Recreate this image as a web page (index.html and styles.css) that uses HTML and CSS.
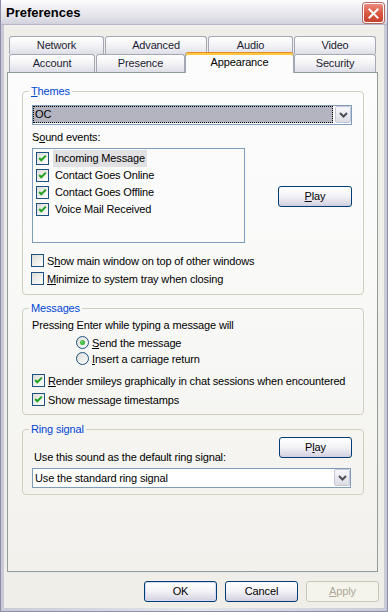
FILE: index.html
```html
<!DOCTYPE html>
<html>
<head>
<meta charset="utf-8">
<title>Preferences</title>
<link rel="stylesheet" href="styles.css">
</head>
<body>
<div class="window">
  <div class="titlebar">
    <span class="title">Preferences</span>
    <div class="close">
      <svg width="21" height="20" viewBox="0 0 21 20"><path d="M6 5 L15 14 M15 5 L6 14" stroke="#fff" stroke-width="2.2" stroke-linecap="square"/></svg>
    </div>
  </div>
  <div class="client">
    <div class="tabs">
      <div class="tabrow">
        <div class="tab t-network">Network</div>
        <div class="tab t-advanced">Advanced</div>
        <div class="tab t-audio">Audio</div>
        <div class="tab t-video">Video</div>
      </div>
      <div class="tabrow">
        <div class="tab t-account">Account</div>
        <div class="tab t-presence">Presence</div>
        <div class="tab t-appearance selected">Appearance</div>
        <div class="tab t-security">Security</div>
      </div>
    </div>
    <div class="panel">
      <fieldset class="group g-themes">
        <legend><u>T</u>hemes</legend>
        <div class="combo focused">
          <div class="combo-field"><span class="combo-text">OC</span></div>
          <div class="combo-btn"><svg width="9" height="6" viewBox="0 0 9 6"><path d="M1 1 L4.5 4.5 L8 1" fill="none" stroke="#4d4d5a" stroke-width="2"/></svg></div>
        </div>
        <div class="label sound-label">S<u>o</u>und events:</div>
        <div class="sound-row">
          <div class="listbox">
            <div class="lrow"><span class="cb checked"></span><span class="ltext hl">Incoming Message</span></div>
            <div class="lrow"><span class="cb checked"></span><span class="ltext">Contact Goes Online</span></div>
            <div class="lrow"><span class="cb checked"></span><span class="ltext">Contact Goes Offline</span></div>
            <div class="lrow"><span class="cb checked"></span><span class="ltext">Voice Mail Received</span></div>
          </div>
          <div class="btn play1"><u>P</u>lay</div>
        </div>
        <div class="check c-first"><span class="cb"></span><span>S<u>h</u>ow main window on top of other windows</span></div>
        <div class="check c-next"><span class="cb"></span><span><u>M</u>inimize to system tray when closing</span></div>
      </fieldset>

      <fieldset class="group g-messages">
        <legend>Messages</legend>
        <div class="label msg-label">Pressing Enter while typing a message will</div>
        <div class="radio r-first"><span class="rb on"></span><span><u>S</u>end the message</span></div>
        <div class="radio r-next"><span class="rb"></span><span><u>I</u>nsert a carriage return</span></div>
        <div class="check c-render"><span class="cb checked"></span><span><u>R</u>ender smileys graphically in chat sessions when encountered</span></div>
        <div class="check c-stamp"><span class="cb checked"></span><span>Show message timestamps</span></div>
      </fieldset>

      <fieldset class="group g-ring">
        <legend>Ring signal</legend>
        <div class="ring-top"><div class="btn play2">P<u>l</u>ay</div></div>
        <div class="label ring-label">Use this sound as the default ring signal:</div>
        <div class="combo ring-combo">
          <div class="combo-field plain"><span class="combo-text">Use the standard ring signal</span></div>
          <div class="combo-btn"><svg width="9" height="6" viewBox="0 0 9 6"><path d="M1 1 L4.5 4.5 L8 1" fill="none" stroke="#4d4d5a" stroke-width="2"/></svg></div>
        </div>
      </fieldset>
    </div>
    <div class="buttons">
      <div class="btn default">OK</div>
      <div class="btn">Cancel</div>
      <div class="btn disabled"><u>A</u>pply</div>
    </div>
  </div>
</div>
</body>
</html>
```
FILE: styles.css
```css
* { box-sizing: border-box; }
html, body { margin: 0; padding: 0; }
body {
  width: 388px; height: 612px; overflow: hidden;
  font-family: "Liberation Sans", Arial, sans-serif;
  font-size: 11px; color: #000; background: #fff;
  letter-spacing: -0.15px;
  white-space: nowrap;
}
u { text-decoration: underline; text-underline-offset: 1px; }

.window {
  width: 388px; height: 612px;
  display: flex; flex-direction: column;
  background: linear-gradient(90deg, #c9c9d8, #e4e4ec 50%, #c9c9d8);
  border: 1px solid #8d8daa; border-top: 0;
}
.titlebar {
  height: 25px; flex: none;
  display: flex; align-items: center; justify-content: space-between;
  padding: 0 3px 0 5px;
  background: linear-gradient(#fdfdfe 0%, #eeeef3 35%, #e2e2ea 70%, #d2d2de 100%);
  border-bottom: 1px solid #b6b6c8;
}
.title { font-size: 13px; font-weight: bold; color: #000; margin-top: 1px; letter-spacing: 0; }
.close {
  width: 21px; height: 20px; margin-top: 2px;
  border: 1px solid #fff; border-radius: 3px;
  background: linear-gradient(#ec8a7c, #d9553f 55%, #c6412f);
  box-shadow: 0 0 0 1px #b36a62;
  display: flex;
}
.client {
  flex: 1; margin: 0 3px 3px 3px;
  background: #efeee9;
  display: flex; flex-direction: column;
  padding-top: 11px;
}
.tabs { margin-left: 5px; }
.tabrow { display: flex; height: 18px; }
.tab {
  height: 18px;
  border: 1px solid #a3a8b4; border-bottom: 0;
  border-radius: 3px 3px 0 0;
  background: linear-gradient(#ffffff, #f3f3f6 50%, #dedee8);
  color: #1c1c30; text-align: center; line-height: 17px;
  margin-left: 1px;
}
.t-network { width: 95px; margin-left: 0; }
.t-advanced { width: 102px; margin-left: 1px; }
.t-audio { width: 85px; }
.t-video { width: 82px; margin-left: 1px; }
.t-account { width: 86px; margin-left: 0; }
.t-presence { width: 89px; }
.t-appearance { width: 109px; margin-left: 0; }
.t-security { width: 82px; margin-left: 0; }
.tab.selected {
  position: relative; z-index: 1;
  height: 21px; margin-top: -2px;
  background: #fcfcfd;
  border-top: 1px solid #e68b2c;
  box-shadow: inset 0 2px 0 #ffc83c;
  line-height: 18px;
  color: #000;
}

.panel {
  width: 371px; height: 500px; margin-left: 3px; flex: none;
  border: 1px solid #919b9c;
  background: linear-gradient(#fcfcfd, #f9f9f8 40%, #f2f1ec);
  display: flex; flex-direction: column;
}
.group {
  margin: 0 13px 0 14px;
  border: 1px solid #d0d0bf; border-radius: 4px;
  padding: 0 10px 0 9px;
  min-width: 0;
}
.group legend {
  padding: 0 2px; margin-left: -3px;
  color: #0046d5; line-height: 13px;
}
.g-themes { margin-top: 12px; padding-bottom: 9px; }
.g-messages { margin-top: 7px; padding-bottom: 8px; }
.g-ring { margin-top: 8px; padding-bottom: 6px; }

.label { line-height: 13px; }

.combo {
  width: 320px; height: 20px;
  border: 1px solid #7f9db9; background: #fff;
  display: flex; margin-top: 7px;
}
.combo-field {
  flex: 1; margin: 0 2px 1px 0;
  background: #b4b4c0;
  outline: 1px dotted #000; outline-offset: -1px;
  display: flex; align-items: center; padding-left: 2px;
}
.combo-field.plain { background: #fff; outline: none; margin: 0; }
.combo-text { line-height: 13px; }
.combo-btn {
  width: 16px; margin: 0 0 1px 0;
  border: 1px solid #c3c7d6; border-radius: 2px;
  background: linear-gradient(#f7f7fa, #dcdce6);
  display: flex; align-items: center; justify-content: center;
}

.sound-label { margin-top: 6px; }
.sound-row { display: flex; align-items: flex-start; margin-top: 4px; }
.listbox {
  width: 213px; height: 95px;
  border: 1px solid #7f9db9; background: #fbfbfb;
  padding: 1px 0 0 3px;
}
.lrow { display: flex; align-items: center; height: 17px; }
.ltext { margin-left: 4px; padding: 0 2px 0 2px; line-height: 17px; }
.ltext.hl { background: #e1e1e4; }

.btn {
  width: 73px; height: 21px;
  border: 1px solid #003c74; border-radius: 3px;
  background: linear-gradient(#ffffff, #f4f4f8 45%, #dcdbe6 85%, #cfcde0);
  display: flex; align-items: center; justify-content: center;
  line-height: 13px;
}
.play1 { width: 74px; margin-left: auto; margin-right: 1px; margin-top: 38px; }
.ring-top { display: flex; justify-content: flex-end; margin-top: 1px; }
.play2 { margin-right: 1px; }
.ring-label { margin-top: -7px; padding-left: 2px; }
.ring-combo { margin-top: 4px; width: 319px; }

.check { display: flex; align-items: center; height: 13px; }
.check .cb { margin-right: 3px; }
.c-first { margin-top: 11px; margin-left: -1px; }
.c-next { margin-top: 5px; margin-left: -1px; }
.msg-label { margin-top: 4px; }
.radio { display: flex; align-items: center; height: 13px; margin-left: 44px; }
.radio .rb { margin-right: 3px; }
.r-first { margin-top: 4px; }
.r-next { margin-top: 3px; }
.c-render { margin-top: 9px; }
.c-stamp { margin-top: 6px; }

.cb {
  width: 13px; height: 13px; flex: none;
  border: 1px solid #1c5180;
  background: linear-gradient(135deg, #dcdcd7, #ffffff);
  display: inline-block;
}
.cb.checked {
  background:
    url("data:image/svg+xml;utf8,<svg xmlns='http://www.w3.org/2000/svg' width='11' height='11' viewBox='0 0 11 11'><path d='M2.2 5 L4.3 7.2 L8.8 2.6' fill='none' stroke='%2321a121' stroke-width='2'/></svg>") no-repeat center,
    linear-gradient(135deg, #dcdcd7, #ffffff);
}
.rb {
  width: 13px; height: 13px; flex: none; border-radius: 50%;
  border: 1px solid #1c5180;
  background: linear-gradient(135deg, #dcdcd7, #ffffff);
  display: flex; align-items: center; justify-content: center;
}
.rb.on::after {
  content: ""; width: 5px; height: 5px; border-radius: 50%;
  background: radial-gradient(circle at 40% 40%, #63d363, #21a121);
}

.buttons {
  display: flex; justify-content: flex-end; gap: 8px;
  margin-top: 9px; margin-right: 5px;
}
.btn.default { box-shadow: inset 0 0 0 1px #cfdcf8; }
.btn.disabled {
  border-color: #c9c7ba; background: #f5f4ea; color: #aca899;
}
```
